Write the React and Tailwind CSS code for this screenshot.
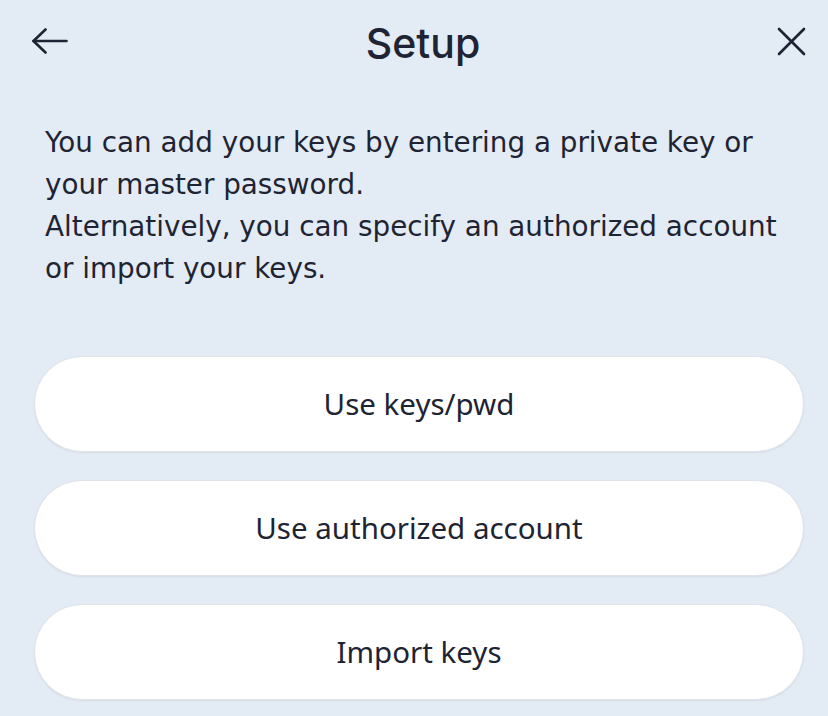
import React from "react";

function Btn({ children }) {
  return (
    <button className="h-[96px] w-full rounded-full bg-white border border-[#dfe3e8] shadow-[0_1px_2px_rgba(0,0,0,0.06)] text-[29.5px] text-[#1e2433] font-['Noto_Sans',sans-serif] flex items-center justify-center">
      {children}
    </button>
  );
}

export default function App() {
  return (
    <div className="min-h-[716px] w-[828px] bg-[#e3ebf4] text-[#1e2433] overflow-hidden">
      <div className="h-[82px] flex items-center justify-between pl-[32px] pr-[22px]">
        <svg width="36" height="26" viewBox="0 0 36 26" fill="none" stroke="#1e2433" strokeWidth="2.6" strokeLinecap="round" strokeLinejoin="round">
          <path d="M1.5 13H34.5" />
          <path d="M13.5 1.5L1.5 13L13.5 24.5" />
        </svg>
        <div className="font-['Inter',sans-serif] font-medium text-[41px] leading-none translate-x-[1px] translate-y-[2px]">Setup</div>
        <svg width="30" height="30" viewBox="0 0 30 30" fill="none" stroke="#1e2433" strokeWidth="2.6" strokeLinecap="round">
          <path d="M3 3L28 28" />
          <path d="M28 3L3 28" />
        </svg>
      </div>
      <p className="mt-[40px] pl-[45px] text-[27.8px] leading-[42px] font-['DejaVu_Sans',sans-serif] whitespace-nowrap">
        You can add your keys by entering a private key or
        <br />
        your master password.
        <br />
        Alternatively, you can specify an authorized account
        <br />
        or import your keys.
      </p>
      <div className="mt-[66px] ml-[34px] mr-[24px] flex flex-col gap-[28px]">
        <Btn>Use keys/pwd</Btn>
        <Btn>Use authorized account</Btn>
        <Btn>Import keys</Btn>
      </div>
    </div>
  );
}
